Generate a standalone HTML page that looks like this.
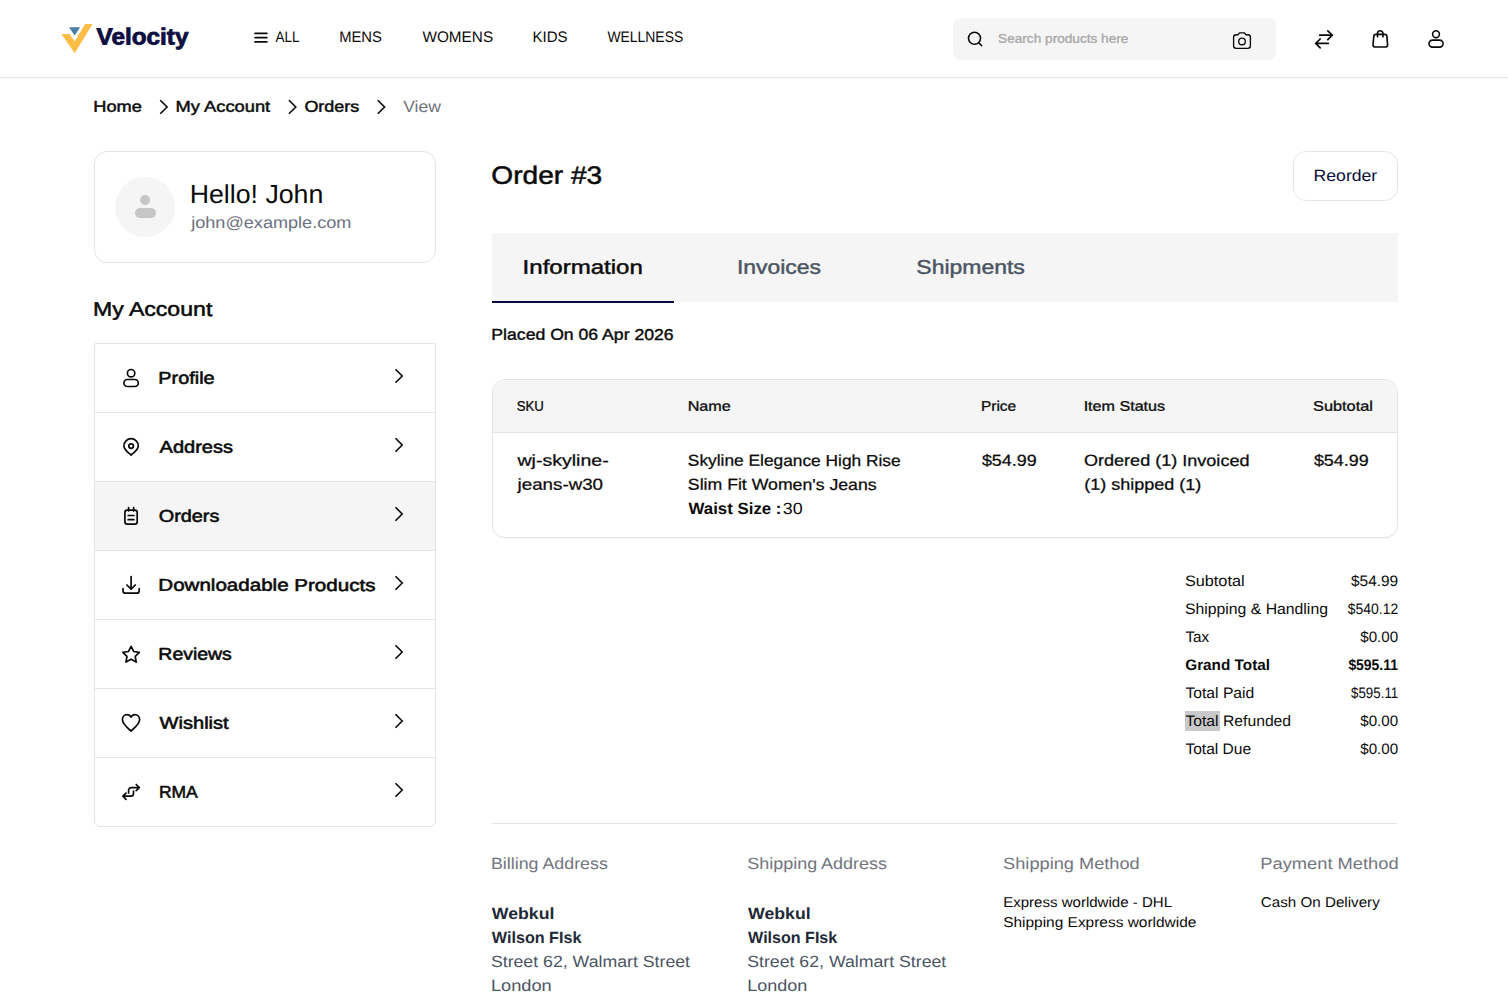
<!DOCTYPE html>
<html lang="en">
<head>
<meta charset="utf-8">
<title>Order #3 - Velocity</title>
<style>
html,body{margin:0;padding:0;background:#fff;}
html{width:1508px;height:1000px;overflow:hidden;}
body{width:1508px;height:1000px;position:relative;overflow:hidden;font-family:"Liberation Sans",sans-serif;}
.t{position:absolute;white-space:nowrap;line-height:40px;font-family:"Liberation Sans",sans-serif;transform-origin:0 50%;}
.abs{position:absolute;}
svg{position:absolute;left:0;top:0;overflow:visible;}
.ic{fill:none;stroke:#0a0a0a;stroke-width:1.5;stroke-linecap:round;stroke-linejoin:round;}
</style>
</head>
<body>
<div id="page" style="position:absolute;left:0;top:0;width:1508px;height:1000px;overflow:hidden;contain:paint">
<!-- header -->
<div class="abs" style="left:0;top:77px;width:1508px;height:1px;background:#e5e5e5"></div>
<div class="abs" style="left:0;top:78px;width:1508px;height:1px;background:#f9f9f9"></div>
<div class="abs" style="left:953px;top:18px;width:322.5px;height:42px;border-radius:8px;background:#f5f5f5"></div>

<!-- sidebar hello card -->
<div class="abs" style="left:94px;top:151px;width:340px;height:110px;border:1px solid #e5e5e5;border-radius:13px"></div>
<div class="abs" style="left:115px;top:177px;width:60px;height:60px;border-radius:50%;background:#f5f5f5"></div>
<div class="abs" style="left:140px;top:195px;width:10px;height:10px;border-radius:50%;background:#c6c6c6"></div>
<div class="abs" style="left:134.5px;top:208.2px;width:21.2px;height:10px;border-radius:5px;background:#c6c6c6"></div>

<!-- sidebar menu -->
<div class="abs" style="left:94px;top:343px;width:340px;height:482px;border:1px solid #e5e5e5;border-radius:2px 2px 6px 6px;overflow:hidden">
  <div class="abs" style="left:0;top:138px;width:340px;height:68px;background:#f5f5f5"></div>
  <div class="abs" style="left:0;top:68px;width:340px;height:1px;background:#e5e5e5"></div>
  <div class="abs" style="left:0;top:137px;width:340px;height:1px;background:#e5e5e5"></div>
  <div class="abs" style="left:0;top:206px;width:340px;height:1px;background:#e5e5e5"></div>
  <div class="abs" style="left:0;top:275px;width:340px;height:1px;background:#e5e5e5"></div>
  <div class="abs" style="left:0;top:344px;width:340px;height:1px;background:#e5e5e5"></div>
  <div class="abs" style="left:0;top:413px;width:340px;height:1px;background:#e5e5e5"></div>
</div>

<!-- reorder button -->
<div class="abs" style="left:1293px;top:151px;width:103px;height:48px;border:1px solid #e5e5e5;border-radius:13px"></div>

<!-- tabs -->
<div class="abs" style="left:492px;top:233px;width:906px;height:69px;background:#f5f5f5"></div>
<div class="abs" style="left:492px;top:301px;width:182px;height:2px;background:#060c3b"></div>

<!-- table -->
<div class="abs" style="left:492px;top:379px;width:904px;height:157px;border:1px solid #e5e5e5;border-radius:13px;overflow:hidden;box-shadow:0 1px 1px rgba(0,0,0,0.04)">
  <div class="abs" style="left:0;top:0;width:904px;height:52px;background:#f5f5f5;border-bottom:1px solid #e5e5e5"></div>
</div>

<!-- selection highlight on "Total" -->
<div class="abs" style="left:1185px;top:711px;width:35px;height:20px;background:#c9c9cc"></div>

<!-- divider -->
<div class="abs" style="left:492px;top:823px;width:905px;height:1px;background:#e5e5e5"></div>

<svg width="1508" height="1000" viewBox="0 0 1508 1000">
  <!-- logo -->
  <polygon points="61.4,34 69.6,34 74.7,41.2 85.2,24 92.6,24 74.7,53.2" fill="#fbbd45"/>
  <polygon points="69,27.2 80.2,27.2 74.7,35.6" fill="#4a80a9"/>
  <!-- hamburger -->
  <g class="ic" style="stroke-width:1.8">
    <path d="M255.1 33.4H266.8M255.1 37.7H266.8M255.1 41.9H266.800"/>
  </g>
  <!-- search icon -->
  <g class="ic" style="stroke-width:1.6">
    <circle cx="974.5" cy="38.2" r="6.0"/>
    <path d="M978.9 42.9L981.7 45.7"/>
  </g>
  <!-- camera icon -->
  <g class="ic" style="stroke-width:1.35">
    <path d="M1236.1 34.7H1238L1239.500 32.9H1244.500L1246 34.7H1247.900A2.500 2.500 0 0 1 1250.400 37.200V45.800A2.500 2.500 0 0 1 1247.900 48.300H1236.100A2.500 2.500 0 0 1 1233.600 45.800V37.200A2.500 2.500 0 0 1 1236.100 34.700Z"/>
    <circle cx="1242" cy="41.4" r="3.3"/>
  </g>
  <!-- compare icon -->
  <g class="ic" style="stroke-width:1.7">
    <path d="M1319.7 35.2H1332.3M1327.8 30.8L1332.3 35.2L1327.8 39.6"/>
    <path d="M1328.3 43.4H1315.7M1320.2 39L1315.7 43.4L1320.2 47.8"/>
  </g>
  <!-- bag icon -->
  <g class="ic" style="stroke-width:1.65">
    <path d="M1375.9 34.4H1384.8C1386 34.4 1386.8 35.2 1386.9 36.4L1387.6 44.7C1387.7 46.1 1386.8 47 1385.4 47H1375.2C1373.8 47 1372.9 46.1 1373 44.7L1373.8 36.4C1373.9 35.2 1374.7 34.4 1375.9 34.4Z"/>
    <path d="M1377.5 36.8V33.5A2.75 2.75 0 0 1 1383 33.5V36.8"/>
  </g>
  <!-- user icon -->
  <g class="ic" style="stroke-width:1.6">
    <circle cx="1436" cy="34.2" r="3.4"/>
    <rect x="1429" y="40.1" width="14.1" height="7" rx="3.5"/>
  </g>
  <!-- breadcrumb chevrons -->
  <g class="ic" style="stroke-width:1.6;stroke-linecap:square;stroke-linejoin:miter">
    <path d="M160.8 100.8L167.1 107L160.8 113.2"/>
    <path d="M289.5 100.8L295.8 107L289.5 113.2"/>
    <path d="M378.3 100.8L384.6 107L378.3 113.2"/>
  </g>
  <!-- sidebar chevrons -->
  <g class="ic" style="stroke-width:1.6;stroke-linecap:square;stroke-linejoin:miter">
    <path d="M396 369.8L402.2 376L396 382.2"/>
    <path d="M396 438.8L402.2 445L396 451.2"/>
    <path d="M396 507.8L402.2 514L396 520.2"/>
    <path d="M396 576.8L402.2 583L396 589.2"/>
    <path d="M396 645.8L402.2 652L396 658.2"/>
    <path d="M396 714.8L402.2 721L396 727.2"/>
    <path d="M396 783.8L402.2 790L396 796.2"/>
  </g>
  <!-- sidebar icons -->
  <g class="ic" style="stroke-width:1.7">
    <!-- profile -->
    <circle cx="131.1" cy="373.2" r="3.7"/>
    <rect x="123.9" y="379.5" width="14.4" height="7" rx="3.5"/>
    <!-- address pin -->
    <path d="M131.1 455.1C128.4 452.6 123.9 449.6 123.9 445.9A7.2 7.2 0 0 1 138.3 445.9C138.3 449.6 133.8 452.6 131.1 455.1Z"/>
    <circle cx="131.1" cy="446.1" r="2.3"/>
    <!-- orders -->
    <rect x="124.9" y="510.1" width="12.3" height="14" rx="2.4"/>
    <path d="M128.6 507.6V511M133.6 507.6V511M128.2 515.5H133.9M128.2 519.7H133.9"/>
    <!-- download -->
    <path d="M131.1 576.6V589.2M126.9 585L131.1 589.2L135.3 585"/>
    <path d="M123 588.6V590.7C123 592.2 124 593.2 125.5 593.2H136.7C138.2 593.2 139.2 592.2 139.2 590.7V588.6"/>
    <!-- star -->
    <path d="M131.1 646.3L133.66 651.48L139.37 652.31L135.24 656.34L136.21 662.04L131.1 659.35L125.99 662.04L126.96 656.34L122.83 652.31L128.54 651.48Z"/>
    <!-- heart -->
    <path d="M131 731C128.5 728.7 122.4 724.5 122.4 719.6C122.4 716.8 124.5 714.7 127 714.7C128.7 714.7 130.2 715.6 131 717.2C131.8 715.6 133.3 714.7 135 714.7C137.500 714.7 139.6 716.8 139.6 719.6C139.6 724.5 133.500 728.7 131 731Z"/>
    <!-- rma -->
    <path d="M128.6 793V790.3A2.7 2.7 0 0 1 131.300 787.600H139.300M136.200 784.500L139.300 787.600L136.200 790.700"/>
    <path d="M133.500 791V793.500A2.700 2.700 0 0 1 130.800 796.200H122.900M126 793.100L122.900 796.200L126 799.300"/>
  </g>
</svg>

<header>
  <div class="t" style="left:96px;top:16px;font-size:23.3px;color:#0d0f3f;font-weight:700;-webkit-text-stroke:0.8px #0d0f3f;transform:translate(0.53px,0.44px) scaleX(1.0436) rotate(0.03deg)">Velocity</div>
  <div class="t" style="left:275px;top:17px;font-size:15.3px;color:#0a0a0a;font-weight:400;transform:translate(0.61px,0.00px) scaleX(0.8771) rotate(0.03deg)">ALL</div>
  <div class="t" style="left:339px;top:17px;font-size:15.3px;color:#0a0a0a;font-weight:400;transform:translate(0.18px,0.00px) scaleX(0.9659) rotate(0.03deg)">MENS</div>
  <div class="t" style="left:422px;top:17px;font-size:15.3px;color:#0a0a0a;font-weight:400;transform:translate(0.48px,0.00px) scaleX(1.0014) rotate(0.03deg)">WOMENS</div>
  <div class="t" style="left:532px;top:17px;font-size:15.3px;color:#0a0a0a;font-weight:400;transform:translate(0.60px,0.00px) scaleX(0.9814) rotate(0.03deg)">KIDS</div>
  <div class="t" style="left:607px;top:17px;font-size:15.3px;color:#0a0a0a;font-weight:400;transform:translate(0.46px,0.00px) scaleX(0.9088) rotate(0.03deg)">WELLNESS</div>
  <div class="t" style="left:998px;top:18px;font-size:12.6px;color:#a6a6a6;font-weight:400;-webkit-text-stroke:0.3px #a6a6a6;transform:translate(0.09px,0.82px) scaleX(1.0821) rotate(0.03deg)">Search products here</div>
</header>
<nav aria-label="Breadcrumb">
  <div class="t" style="left:93px;top:86px;font-size:15.6px;color:#0a0a0a;font-weight:400;-webkit-text-stroke:0.45px #0a0a0a;transform:translate(0.30px,0.81px) scaleX(1.1682) rotate(0.03deg)">Home</div>
  <div class="t" style="left:175px;top:86px;font-size:15.6px;color:#0a0a0a;font-weight:400;-webkit-text-stroke:0.45px #0a0a0a;transform:translate(0.58px,0.81px) scaleX(1.1734) rotate(0.03deg)">My Account</div>
  <div class="t" style="left:304px;top:86px;font-size:15.6px;color:#0a0a0a;font-weight:400;-webkit-text-stroke:0.45px #0a0a0a;transform:translate(0.40px,0.81px) scaleX(1.1505) rotate(0.03deg)">Orders</div>
  <div class="t" style="left:403px;top:85px;font-size:16.2px;color:#70727b;font-weight:400;transform:translate(0.18px,1.00px) scaleX(1.0836) rotate(0.03deg)">View</div>
</nav>
<aside>
  <div class="t" style="left:189px;top:174px;font-size:26.0px;color:#0a0a0a;font-weight:400;transform:translate(0.63px,0.00px) scaleX(1.0279) rotate(0.03deg)">Hello! John</div>
  <div class="t" style="left:191px;top:202px;font-size:16.3px;color:#6b7080;font-weight:400;transform:translate(0.23px,0.00px) scaleX(1.1109) rotate(0.03deg)">john@example.com</div>
  <div class="t" style="left:92px;top:288px;font-size:19.8px;color:#0a0a0a;font-weight:400;-webkit-text-stroke:0.5px #0a0a0a;transform:translate(0.98px,0.83px) scaleX(1.1669) rotate(0.03deg)">My Account</div>
  <div class="t" style="left:158px;top:358px;font-size:17.0px;color:#0a0a0a;font-weight:400;-webkit-text-stroke:0.55px #0a0a0a;transform:translate(0.36px,0.82px) scaleX(1.1667) rotate(0.03deg)">Profile</div>
  <div class="t" style="left:159px;top:427px;font-size:17.0px;color:#0a0a0a;font-weight:400;-webkit-text-stroke:0.55px #0a0a0a;transform:translate(0.56px,0.82px) scaleX(1.1768) rotate(0.03deg)">Address</div>
  <div class="t" style="left:158px;top:496px;font-size:17.0px;color:#0a0a0a;font-weight:400;-webkit-text-stroke:0.55px #0a0a0a;transform:translate(0.68px,0.82px) scaleX(1.1692) rotate(0.03deg)">Orders</div>
  <div class="t" style="left:158px;top:565px;font-size:17.0px;color:#0a0a0a;font-weight:400;-webkit-text-stroke:0.55px #0a0a0a;transform:translate(0.30px,0.82px) scaleX(1.2092) rotate(0.03deg)">Downloadable Products</div>
  <div class="t" style="left:158px;top:634px;font-size:17.0px;color:#0a0a0a;font-weight:400;-webkit-text-stroke:0.55px #0a0a0a;transform:translate(0.37px,0.82px) scaleX(1.1429) rotate(0.03deg)">Reviews</div>
  <div class="t" style="left:159px;top:703px;font-size:17.0px;color:#0a0a0a;font-weight:400;-webkit-text-stroke:0.55px #0a0a0a;transform:translate(0.59px,0.82px) scaleX(1.1793) rotate(0.03deg)">Wishlist</div>
  <div class="t" style="left:158px;top:772px;font-size:17.0px;color:#0a0a0a;font-weight:400;-webkit-text-stroke:0.55px #0a0a0a;transform:translate(0.90px,0.82px) scaleX(1.0281) rotate(0.03deg)">RMA</div>
</aside>
<main>
  <div class="t" style="left:491px;top:154px;font-size:25.0px;color:#0a0a0a;font-weight:400;-webkit-text-stroke:0.5px #0a0a0a;transform:translate(0.36px,0.83px) scaleX(1.1226) rotate(0.03deg)">Order #3</div>
  <div class="t" style="left:1313px;top:154px;font-size:16.2px;color:#060c3b;font-weight:400;transform:translate(0.61px,1.00px) scaleX(1.0869) rotate(0.03deg)">Reorder</div>
  <div class="t" style="left:522px;top:246px;font-size:19.7px;color:#0a0a0a;font-weight:400;-webkit-text-stroke:0.45px #0a0a0a;transform:translate(0.59px,0.83px) scaleX(1.2211) rotate(0.03deg)">Information</div>
  <div class="t" style="left:736px;top:246px;font-size:19.7px;color:#4b5563;font-weight:400;-webkit-text-stroke:0.45px #4b5563;transform:translate(0.91px,0.83px) scaleX(1.1623) rotate(0.03deg)">Invoices</div>
  <div class="t" style="left:916px;top:246px;font-size:19.7px;color:#4b5563;font-weight:400;-webkit-text-stroke:0.45px #4b5563;transform:translate(0.35px,0.83px) scaleX(1.1663) rotate(0.03deg)">Shipments</div>
  <div class="t" style="left:491px;top:314px;font-size:15.7px;color:#0a0a0a;font-weight:400;-webkit-text-stroke:0.4px #0a0a0a;transform:translate(0.34px,0.81px) scaleX(1.1237) rotate(0.03deg)">Placed On 06 Apr 2026</div>
  <div class="t" style="left:516px;top:386px;font-size:13.8px;color:#0a0a0a;font-weight:400;-webkit-text-stroke:0.3px #0a0a0a;transform:translate(0.74px,0.82px) scaleX(0.9534) rotate(0.03deg)">SKU</div>
  <div class="t" style="left:687px;top:386px;font-size:13.8px;color:#0a0a0a;font-weight:400;-webkit-text-stroke:0.3px #0a0a0a;transform:translate(0.67px,0.82px) scaleX(1.1718) rotate(0.03deg)">Name</div>
  <div class="t" style="left:980px;top:386px;font-size:13.8px;color:#0a0a0a;font-weight:400;-webkit-text-stroke:0.3px #0a0a0a;transform:translate(0.96px,0.82px) scaleX(1.1187) rotate(0.03deg)">Price</div>
  <div class="t" style="left:1083px;top:386px;font-size:13.8px;color:#0a0a0a;font-weight:400;-webkit-text-stroke:0.3px #0a0a0a;transform:translate(0.63px,0.82px) scaleX(1.1675) rotate(0.03deg)">Item Status</div>
  <div class="t" style="left:1313px;top:386px;font-size:13.8px;color:#0a0a0a;font-weight:400;-webkit-text-stroke:0.3px #0a0a0a;transform:translate(0.06px,0.82px) scaleX(1.1827) rotate(0.03deg)">Subtotal</div>
  <div class="t" style="left:517px;top:440px;font-size:15.9px;color:#0a0a0a;font-weight:400;-webkit-text-stroke:0.25px #0a0a0a;transform:translate(0.47px,0.83px) scaleX(1.2298) rotate(0.03deg)">wj-skyline-</div>
  <div class="t" style="left:517px;top:464px;font-size:15.9px;color:#0a0a0a;font-weight:400;-webkit-text-stroke:0.25px #0a0a0a;transform:translate(0.60px,0.83px) scaleX(1.1792) rotate(0.03deg)">jeans-w30</div>
  <div class="t" style="left:687px;top:440px;font-size:15.9px;color:#0a0a0a;font-weight:400;-webkit-text-stroke:0.25px #0a0a0a;transform:translate(0.83px,0.83px) scaleX(1.0901) rotate(0.03deg)">Skyline Elegance High Rise</div>
  <div class="t" style="left:687px;top:464px;font-size:15.9px;color:#0a0a0a;font-weight:400;-webkit-text-stroke:0.25px #0a0a0a;transform:translate(0.85px,0.83px) scaleX(1.1125) rotate(0.03deg)">Slim Fit Women's Jeans</div>
  <div class="t" style="left:688px;top:488px;font-size:16.2px;color:#0a0a0a;font-weight:700;transform:translate(0.56px,0.00px) scaleX(1.0396) rotate(0.03deg)">Waist Size :</div>
  <div class="t" style="left:782px;top:487px;font-size:16.2px;color:#0a0a0a;font-weight:400;transform:translate(0.77px,1.00px) scaleX(1.1007) rotate(0.03deg)">30</div>
  <div class="t" style="left:981px;top:440px;font-size:15.9px;color:#0a0a0a;font-weight:400;-webkit-text-stroke:0.25px #0a0a0a;transform:translate(0.89px,0.83px) scaleX(1.1278) rotate(0.03deg)">$54.99</div>
  <div class="t" style="left:1084px;top:440px;font-size:15.9px;color:#0a0a0a;font-weight:400;-webkit-text-stroke:0.25px #0a0a0a;transform:translate(0.00px,0.83px) scaleX(1.1355) rotate(0.03deg)">Ordered (1) Invoiced</div>
  <div class="t" style="left:1084px;top:464px;font-size:15.9px;color:#0a0a0a;font-weight:400;-webkit-text-stroke:0.25px #0a0a0a;transform:translate(0.27px,0.83px) scaleX(1.1316) rotate(0.03deg)">(1) shipped (1)</div>
  <div class="t" style="left:1313px;top:440px;font-size:15.9px;color:#0a0a0a;font-weight:400;-webkit-text-stroke:0.25px #0a0a0a;transform:translate(0.89px,0.83px) scaleX(1.1257) rotate(0.03deg)">$54.99</div>
  <div class="t" style="left:1184px;top:561px;font-size:15.2px;color:#0a0a0a;font-weight:400;transform:translate(0.92px,0.00px) scaleX(1.0700) rotate(0.03deg)">Subtotal</div>
  <div class="t" style="left:1351px;top:561px;font-size:15.2px;color:#0a0a0a;font-weight:400;transform:translate(0.04px,0.00px) scaleX(1.0136) rotate(0.03deg)">$54.99</div>
  <div class="t" style="left:1184px;top:589px;font-size:15.2px;color:#0a0a0a;font-weight:400;transform:translate(0.97px,0.00px) scaleX(1.0387) rotate(0.03deg)">Shipping &amp; Handling</div>
  <div class="t" style="left:1347px;top:589px;font-size:15.2px;color:#0a0a0a;font-weight:400;transform:translate(0.66px,0.00px) scaleX(0.9204) rotate(0.03deg)">$540.12</div>
  <div class="t" style="left:1185px;top:617px;font-size:15.2px;color:#0a0a0a;font-weight:400;transform:translate(0.48px,0.00px) scaleX(1.0050) rotate(0.03deg)">Tax</div>
  <div class="t" style="left:1360px;top:617px;font-size:15.2px;color:#0a0a0a;font-weight:400;transform:translate(0.27px,0.00px) scaleX(0.9958) rotate(0.03deg)">$0.00</div>
  <div class="t" style="left:1185px;top:645px;font-size:15.2px;color:#0a0a0a;font-weight:700;transform:translate(0.24px,0.00px) scaleX(1.0079) rotate(0.03deg)">Grand Total</div>
  <div class="t" style="left:1348px;top:645px;font-size:15.2px;color:#0a0a0a;font-weight:700;transform:translate(0.38px,0.00px) scaleX(0.9168) rotate(0.03deg)">$595.11</div>
  <div class="t" style="left:1185px;top:673px;font-size:15.2px;color:#0a0a0a;font-weight:400;transform:translate(0.40px,0.00px) scaleX(1.0333) rotate(0.03deg)">Total Paid</div>
  <div class="t" style="left:1351px;top:673px;font-size:15.2px;color:#0a0a0a;font-weight:400;transform:translate(0.04px,0.00px) scaleX(0.8777) rotate(0.03deg)">$595.11</div>
  <div class="t" style="left:1185px;top:701px;font-size:15.2px;color:#0a0a0a;font-weight:400;transform:translate(0.42px,0.00px) scaleX(1.0344) rotate(0.03deg)">Total Refunded</div>
  <div class="t" style="left:1360px;top:701px;font-size:15.2px;color:#0a0a0a;font-weight:400;transform:translate(0.27px,0.00px) scaleX(0.9958) rotate(0.03deg)">$0.00</div>
  <div class="t" style="left:1185px;top:729px;font-size:15.2px;color:#0a0a0a;font-weight:400;transform:translate(0.40px,0.00px) scaleX(1.0234) rotate(0.03deg)">Total Due</div>
  <div class="t" style="left:1360px;top:729px;font-size:15.2px;color:#0a0a0a;font-weight:400;transform:translate(0.27px,0.00px) scaleX(0.9958) rotate(0.03deg)">$0.00</div>
  <div class="t" style="left:490px;top:842px;font-size:16.2px;color:#72757e;font-weight:400;transform:translate(0.93px,1.00px) scaleX(1.1010) rotate(0.03deg)">Billing Address</div>
  <div class="t" style="left:747px;top:842px;font-size:16.2px;color:#72757e;font-weight:400;transform:translate(0.20px,1.00px) scaleX(1.1099) rotate(0.03deg)">Shipping Address</div>
  <div class="t" style="left:1003px;top:842px;font-size:16.2px;color:#72757e;font-weight:400;transform:translate(0.10px,1.00px) scaleX(1.1244) rotate(0.03deg)">Shipping Method</div>
  <div class="t" style="left:1260px;top:842px;font-size:16.2px;color:#72757e;font-weight:400;transform:translate(0.29px,1.00px) scaleX(1.1299) rotate(0.03deg)">Payment Method</div>
  <div class="t" style="left:491px;top:893px;font-size:16.2px;color:#1f2937;font-weight:700;transform:translate(0.80px,0.00px) scaleX(1.0935) rotate(0.03deg)">Webkul</div>
  <div class="t" style="left:491px;top:917px;font-size:16.2px;color:#1f2937;font-weight:700;transform:translate(0.82px,0.00px) scaleX(0.9979) rotate(0.03deg)">Wilson FIsk</div>
  <div class="t" style="left:490px;top:940px;font-size:16.2px;color:#4b5563;font-weight:400;transform:translate(0.90px,1.00px) scaleX(1.0938) rotate(0.03deg)">Street 62, Walmart Street</div>
  <div class="t" style="left:490px;top:964px;font-size:16.2px;color:#4b5563;font-weight:400;transform:translate(0.88px,1.00px) scaleX(1.1273) rotate(0.03deg)">London</div>
  <div class="t" style="left:748px;top:893px;font-size:16.2px;color:#1f2937;font-weight:700;transform:translate(0.10px,0.00px) scaleX(1.0917) rotate(0.03deg)">Webkul</div>
  <div class="t" style="left:748px;top:917px;font-size:16.2px;color:#1f2937;font-weight:700;transform:translate(0.12px,0.00px) scaleX(0.9923) rotate(0.03deg)">Wilson FIsk</div>
  <div class="t" style="left:747px;top:940px;font-size:16.2px;color:#4b5563;font-weight:400;transform:translate(0.20px,1.00px) scaleX(1.0938) rotate(0.03deg)">Street 62, Walmart Street</div>
  <div class="t" style="left:747px;top:964px;font-size:16.2px;color:#4b5563;font-weight:400;transform:translate(0.20px,1.00px) scaleX(1.1119) rotate(0.03deg)">London</div>
  <div class="t" style="left:1003px;top:881px;font-size:14.2px;color:#0a0a0a;font-weight:400;transform:translate(0.14px,1.00px) scaleX(1.0604) rotate(0.03deg)">Express worldwide - DHL</div>
  <div class="t" style="left:1003px;top:901px;font-size:14.2px;color:#0a0a0a;font-weight:400;transform:translate(0.19px,1.00px) scaleX(1.0885) rotate(0.03deg)">Shipping Express worldwide</div>
  <div class="t" style="left:1260px;top:881px;font-size:14.2px;color:#0a0a0a;font-weight:400;transform:translate(0.86px,1.00px) scaleX(1.0693) rotate(0.03deg)">Cash On Delivery</div>
</main>
</div>
</body>
</html>
